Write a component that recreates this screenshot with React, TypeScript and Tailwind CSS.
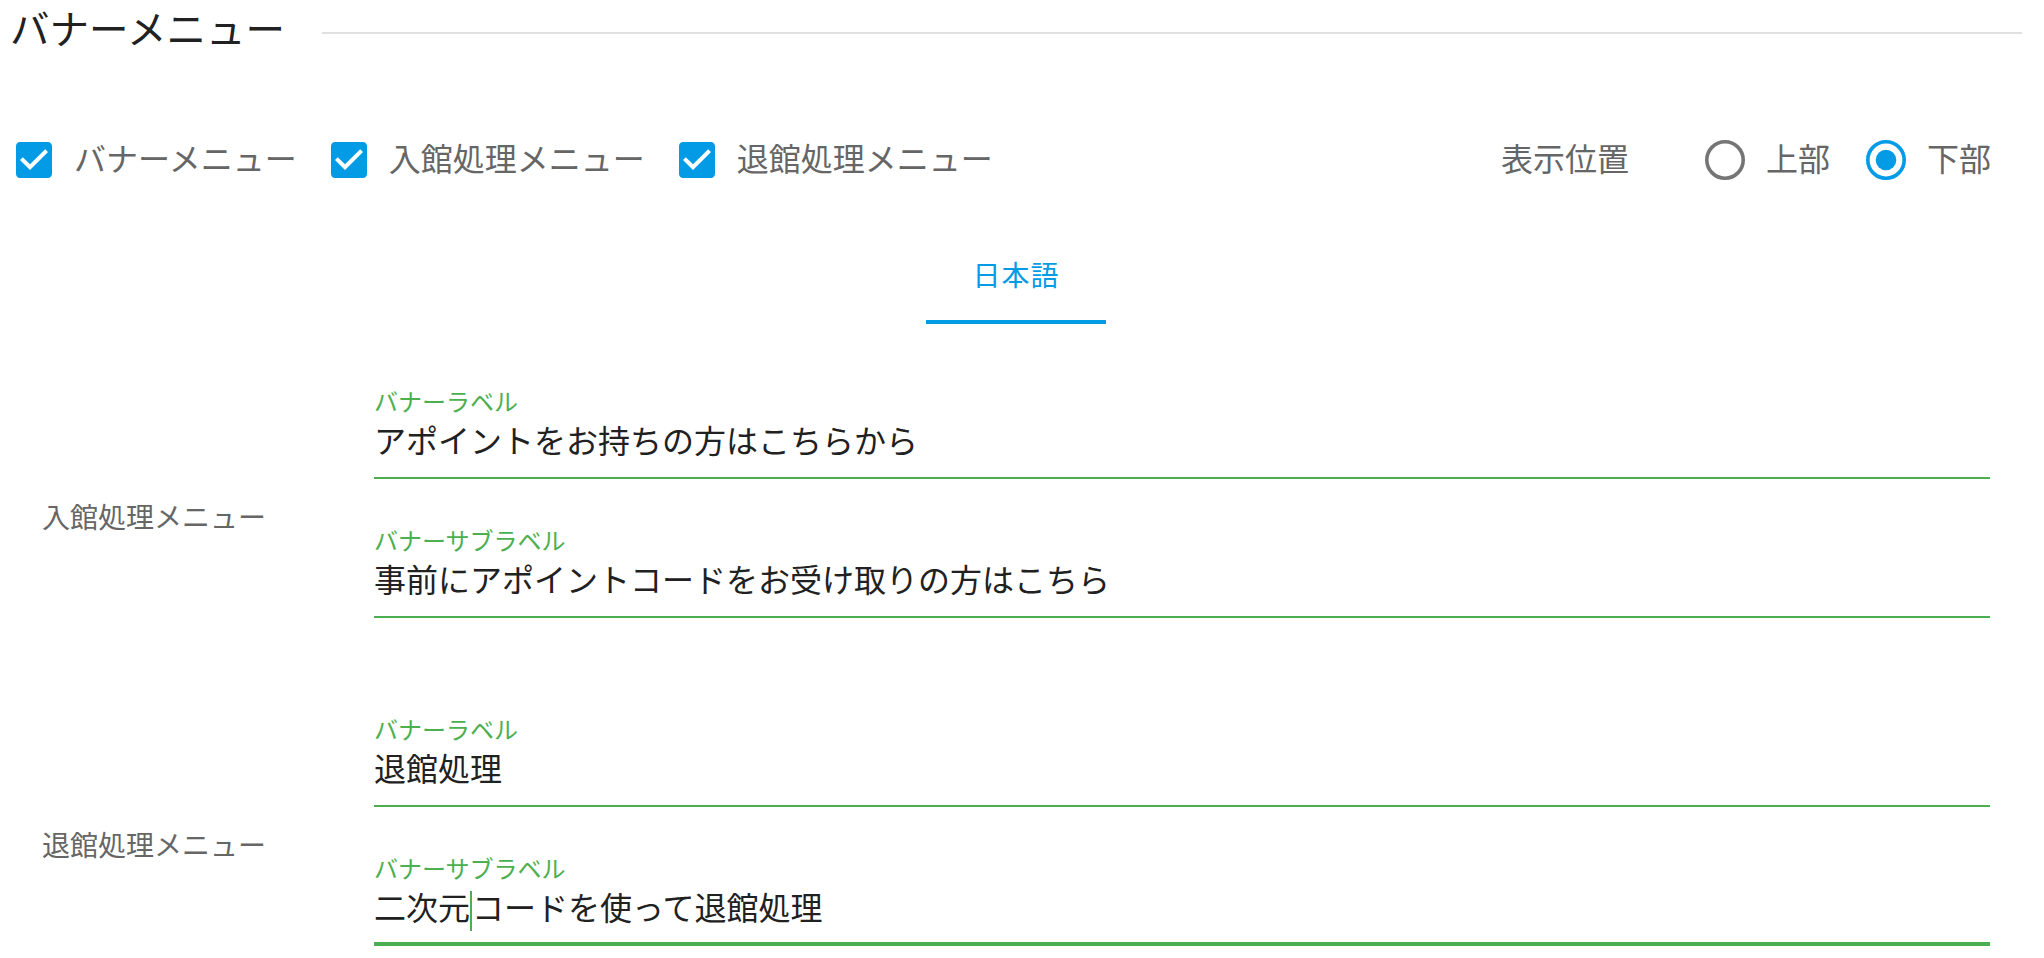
import React from "react";

const CHECK_PATH =
  "M19 3H5c-1.11 0-2 .9-2 2v14c0 1.1.89 2 2 2h14c1.11 0 2-.9 2-2V5c0-1.1-.89-2-2-2zm-9 14l-5-5 1.41-1.41L10 14.17l7.59-7.59L19 8l-7 7z";

function CheckItem({ label, last }: { label: string; last?: boolean }) {
  return (
    <label className={`flex items-center ${last ? "" : "mr-[34px]"}`}>
      <svg width="36" height="36" viewBox="3 3 18 18" className="shrink-0">
        <path fill="#039be5" d={CHECK_PATH} />
      </svg>
      <span className="ml-[22px] pb-[6px] text-[32px] leading-[40px] text-[#666666] whitespace-nowrap">
        {label}
      </span>
    </label>
  );
}

function RadioItem({ label, checked }: { label: string; checked?: boolean }) {
  const color = checked ? "#039be5" : "#757575";
  return (
    <label className="flex items-center">
      <svg width="40" height="40" viewBox="0 0 40 40" className="shrink-0">
        <circle cx="20" cy="20" r="18.2" fill="none" stroke={color} strokeWidth="3.6" />
        {checked && <circle cx="20" cy="20" r="10.3" fill={color} />}
      </svg>
      <span className="ml-[21px] pb-[6px] text-[32px] leading-[40px] text-[#666666] whitespace-nowrap">
        {label}
      </span>
    </label>
  );
}

function Field({
  label,
  children,
  focused,
  className = "",
}: {
  label: string;
  children: React.ReactNode;
  focused?: boolean;
  className?: string;
}) {
  return (
    <div
      className={`${className} border-[#4caf50] ${
        focused ? "border-b-4 pb-[16px]" : "border-b-2 pb-[18px]"
      }`}
    >
      <div className="h-[28px] text-[24px] leading-[28px] text-[#4caf50] whitespace-nowrap">{label}</div>
      <div className="mt-[4px] h-[40px] text-[32px] leading-[40px] text-[#212121] whitespace-nowrap">
        {children}
      </div>
    </div>
  );
}

function Group({
  title,
  className = "",
  children,
}: {
  title: string;
  className?: string;
  children: React.ReactNode;
}) {
  return (
    <div className={`grid grid-cols-[374px_1fr] items-center ${className}`}>
      <div className="pl-[42px] pb-[3px] text-[28px] leading-[36px] text-[#666666] whitespace-nowrap">{title}</div>
      <div className="pb-[30px]">{children}</div>
    </div>
  );
}

export default function App() {
  return (
    <div className="min-h-screen bg-white font-['Noto_Sans_CJK_JP','Noto_Sans',sans-serif]">
      {/* Title */}
      <div className="flex h-[54px] items-center pl-[10px] pr-[22px]">
        <h1 className="text-[39.5px] font-normal leading-[48px] text-[#212121] whitespace-nowrap">バナーメニュー</h1>
        <div className="ml-[37px] mt-[12px] h-[2px] flex-1 bg-[#e0e0e0]" />
      </div>

      {/* Options row */}
      <div className="mt-[64px] flex h-[84px] items-center justify-between pl-[16px] pr-[53px]">
        <div className="flex items-center">
          <CheckItem label="バナーメニュー" />
          <CheckItem label="入館処理メニュー" />
          <CheckItem label="退館処理メニュー" last />
        </div>
        <div className="flex items-center">
          <span className="mr-[76px] pb-[6px] text-[32px] leading-[40px] text-[#666666] whitespace-nowrap">表示位置</span>
          <RadioItem label="上部" />
          <div className="w-[36px]" />
          <RadioItem label="下部" checked />
        </div>
      </div>

      {/* Tabs */}
      <div className="mt-[26px] flex justify-center pr-[12px]">
        <div className="flex w-[180px] flex-col">
          <div className="flex h-[92px] items-center justify-center text-[28px] tracking-[1px] text-[#039be5]">
            日本語
          </div>
          <div className="h-[4px] bg-[#039be5]" />
        </div>
      </div>

      {/* Form */}
      <div className="mt-[63px] pr-[54px]">
        <Group title="入館処理メニュー">
          <Field label="バナーラベル">アポイントをお持ちの方はこちらから</Field>
          <Field label="バナーサブラベル" className="mt-[47px]">
            事前にアポイントコードをお受け取りの方はこちら
          </Field>
        </Group>
        <Group title="退館処理メニュー" className="mt-[67px]">
          <Field label="バナーラベル">退館処理</Field>
          <Field label="バナーサブラベル" className="mt-[47px]" focused>
            二次元
            <span className="relative top-[5px] inline-block h-[40px] w-[2px] bg-[#4caf50] align-top" />
            コードを使って退館処理
          </Field>
        </Group>
      </div>
    </div>
  );
}
